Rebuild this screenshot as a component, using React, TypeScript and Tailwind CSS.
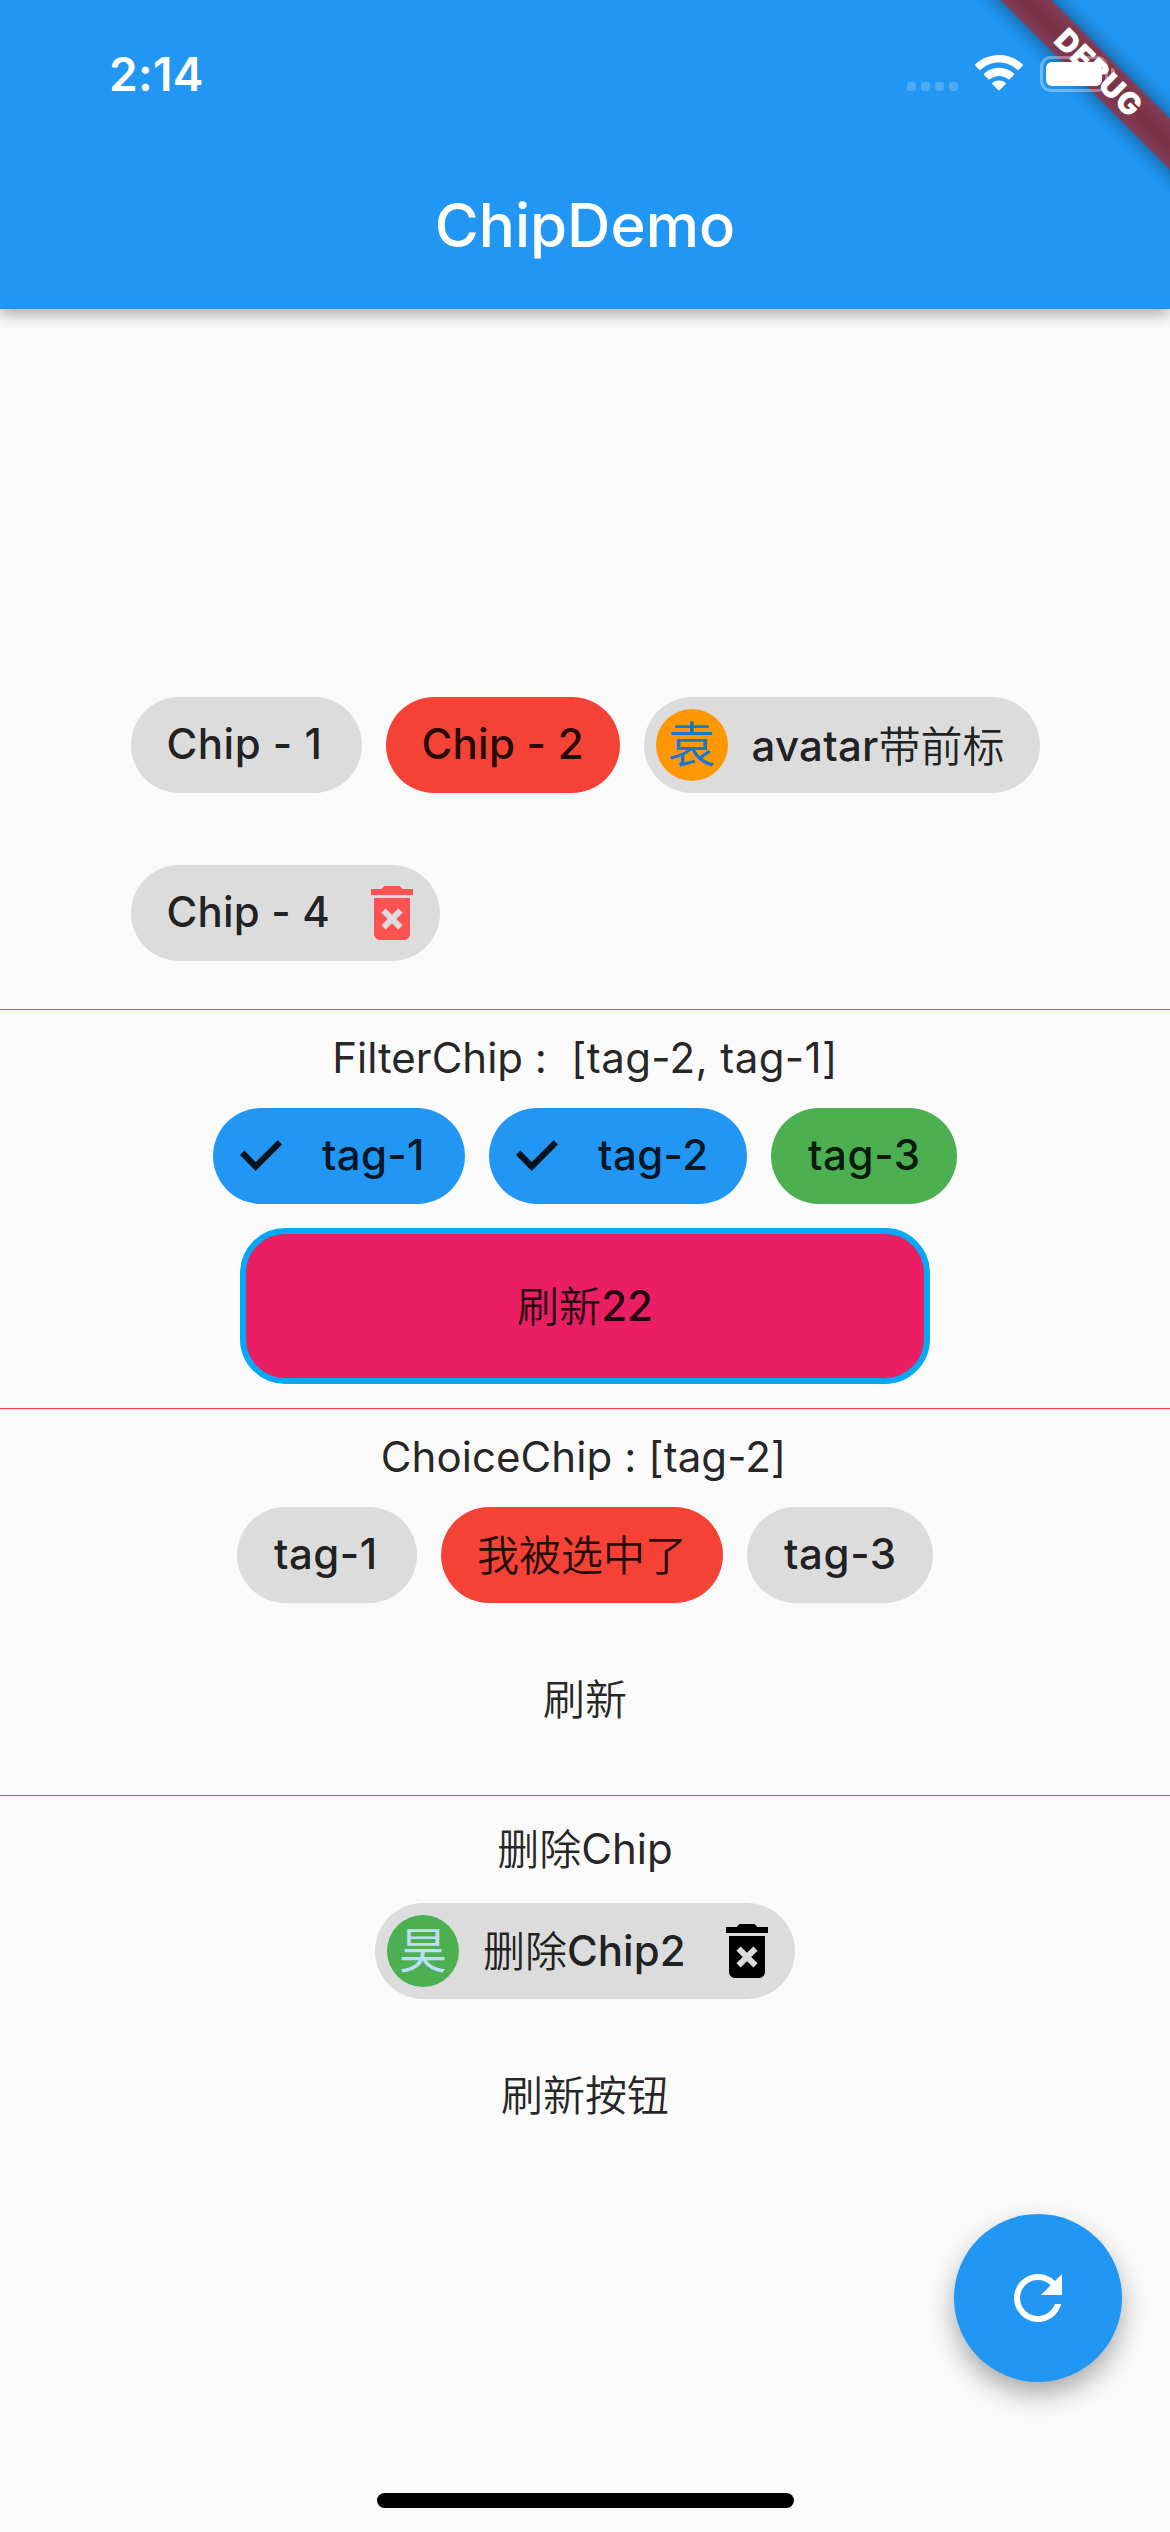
import React from 'react';
import type { ReactNode } from 'react';

const CJK = ({ children }: { children: ReactNode }) => (
  <span className="relative top-px font-['Noto_Sans_CJK_SC',sans-serif] font-[350] leading-none tracking-normal">
    {children}
  </span>
);

function Chip({
  className,
  leading,
  trailing,
  labelClass = '',
  children,
}: {
  className: string;
  leading?: ReactNode;
  trailing?: ReactNode;
  labelClass?: string;
  children: ReactNode;
}) {
  return (
    <div className={`flex h-24 shrink-0 items-center rounded-full ${className}`}>
      {leading && <div className="ml-3 -mr-3 h-[72px] w-[72px] shrink-0">{leading}</div>}
      <div
        className={`ml-9 flex-1 whitespace-pre text-[42px] font-medium leading-[48px] text-black/[0.87] ${labelClass}`}
      >
        {children}
      </div>
      {trailing && <div className="mr-3 h-[72px] w-[72px] shrink-0">{trailing}</div>}
    </div>
  );
}

const Trash = ({ className }: { className: string }) => (
  <svg viewBox="0 0 24 24" className={`h-[72px] w-[72px] ${className}`} fill="currentColor">
    <path d="M6 19c0 1.1.9 2 2 2h8c1.1 0 2-.9 2-2V7H6v12zm2.46-7.12l1.41-1.41L12 12.59l2.12-2.12 1.41 1.41L13.41 14l2.12 2.12-1.41 1.41L12 15.41l-2.12 2.12-1.41-1.41L10.59 14l-2.13-2.12zM15.5 4l-1-1h-5l-1 1H5v2h14V4z" />
  </svg>
);

const Check = () => (
  <svg viewBox="0 0 72 72" className="h-[72px] w-[72px]" fill="none" stroke="black" strokeOpacity="0.87" strokeWidth="6.2">
    <path d="M17.2 32.8 L30.7 46.5 L54.8 22.4" />
  </svg>
);

const Avatar = ({ className, children }: { className: string; children: ReactNode }) => (
  <div
    className={`flex h-[72px] w-[72px] items-center justify-center rounded-full text-[48px] font-normal leading-none ${className}`}
  >
    {children}
  </div>
);

const Divider = () => <div className="h-px w-full bg-[#f44336]" />;

const Caption = ({ className, children }: { className: string; children: ReactNode }) => (
  <div
    className={`flex w-full items-center justify-center whitespace-pre text-[42px] leading-[48px] text-black/[0.87] ${className}`}
  >
    <span>{children}</span>
  </div>
);

function StatusBar() {
  return (
    <div className="relative z-20 flex h-[147px] items-start pl-[109px] text-white">
      <div className="mt-[47px] w-[798px] text-[46px] font-semibold leading-[54px] tracking-[0.3px]">2:14</div>
      <div className="mt-[82px] flex gap-[5px]">
        {[0, 1, 2, 3].map((i) => (
          <div key={i} className="h-[9px] w-[9px] rounded-[3px] bg-white/20" />
        ))}
      </div>
      <svg viewBox="0 0 48 36" className="ml-[17px] mt-[55px] h-9 w-12" fill="white">
        <path d="M24 0C14.8 0 6.400 3.500.3 9.400c-.4.4-.4 1 0 1.400l4 4c.4.4 1 .4 1.400 0C10.500 10.200 16.900 7.500 24 7.500s13.500 2.700 18.300 7.300c.4.4 1 .4 1.400 0l4-4c.4-.4.4-1 0-1.400C41.600 3.500 33.200 0 24 0z" />
        <path d="M24 12.800c-5.700 0-10.900 2.200-14.900 5.700-.4.4-.4 1 0 1.400l4.300 4.400c.4.4 1 .4 1.400 0 2.500-2.100 5.700-3.400 9.200-3.400s6.700 1.300 9.200 3.400c.4.4 1 .4 1.400 0l4.300-4.400c.4-.4.4-1 0-1.400-4-3.500-9.200-5.700-14.900-5.700z" />
        <path d="M24 25.500c-2.500 0-4.700.8-6.500 2.200-.5.4-.5 1 0 1.500l5.700 5.900c.5.500 1.100.5 1.600 0l5.700-5.900c.5-.5.5-1.100 0-1.500-1.800-1.400-4-2.200-6.500-2.200z" />
      </svg>
      <div className="ml-[17px] mt-14 flex items-center">
        <div className="h-9 w-[68px] rounded-[11px] border-[3px] border-white/35 p-[3px]">
          <div className="h-6 w-[56px] rounded-[6px] bg-white" />
        </div>
        <div className="ml-[3px] h-[12px] w-1 rounded-r-full bg-white/40" />
      </div>
    </div>
  );
}

function DebugBanner() {
  return (
    <div className="pointer-events-none absolute right-0 top-0 z-10 h-[240px] w-[240px] overflow-hidden">
      <div className="absolute left-[-32px] top-[54px] flex h-9 w-[400px] rotate-45 items-center justify-center bg-linear-to-b from-[#813d57] via-[#7a3145] to-[#813d57] pl-0.5 text-[30.6px] font-black leading-none tracking-[0.6px] text-white shadow-[0_0_20px_rgba(0,0,0,0.5)]">
        DEBUG
      </div>
    </div>
  );
}

export default function App() {
  return (
    <div className="relative flex h-[2532px] w-[1170px] flex-col overflow-hidden bg-[#fafafa] font-[Inter,'Noto_Sans_CJK_SC',sans-serif]">
      <header className="h-[309px] shrink-0 bg-[#2196f3] shadow-[0_6px_14px_rgba(0,0,0,0.3)]">
        <StatusBar />
        <h1 className="mt-[42px] text-center text-[60px] font-medium leading-[72px] text-white">ChipDemo</h1>
      </header>
      <DebugBanner />

      <main className="flex flex-col items-center">
        <section className="mb-12 mt-[388px] flex w-[909px] flex-wrap gap-x-6 gap-y-[72px]">
          <Chip className="w-[231px] bg-[#dcdcdc]" labelClass="tracking-[0.5px] pb-0.5">
            Chip - 1
          </Chip>
          <Chip className="w-[234px] bg-[#f44336]" labelClass="tracking-[0.25px] pb-0.5">
            Chip - 2
          </Chip>
          <Chip
            className="w-[396px] bg-[#dcdcdc]"
            labelClass="tracking-[0.25px] pt-0.5"
            leading={<Avatar className="bg-[#ff9800] text-[#1976d2]">袁</Avatar>}
          >
            avatar<CJK>带前标</CJK>
          </Chip>
          <Chip
            className="w-[309px] bg-[#dcdcdc]"
            labelClass="tracking-[0.2px] pb-0.5"
            trailing={<Trash className="text-[#ff5252]" />}
          >
            Chip - 4
          </Chip>
        </section>

        <Divider />
        <Caption className="mb-[3px] h-[95px]">
          FilterChip : <span className="tracking-[0.5px]"> </span>
          <span className="tracking-[0.4px]">[tag-2, tag-1]</span>
        </Caption>
        <section className="flex gap-6">
          <Chip className="w-[252px] bg-[#2196f3]" labelClass="tracking-[0.3px] pl-px pb-0.5" leading={<Check />}>
            tag-1
          </Chip>
          <Chip className="w-[258px] bg-[#2196f3]" labelClass="tracking-[0.4px] pl-px pb-0.5" leading={<Check />}>
            tag-2
          </Chip>
          <Chip className="w-[186px] bg-[#4caf50]" labelClass="tracking-[0.6px] pl-px pb-0.5">
            tag-3
          </Chip>
        </section>
        <button className="my-6 flex h-[156px] w-[690px] items-center justify-center rounded-[45px] border-[6px] border-[#03a9f4] bg-[#e91e63] text-[42px] font-medium leading-[48px] text-black/[0.87]">
          <span>
            <CJK>刷新</CJK>22
          </span>
        </button>

        <Divider />
        <Caption className="mb-[3px] h-[95px] pr-[3px] tracking-[0.08px]">ChoiceChip : [tag-2]</Caption>
        <section className="flex gap-6">
          <Chip className="w-[180px] bg-[#dcdcdc]" labelClass="tracking-[0.5px] pl-px pb-0.5">
            tag-1
          </Chip>
          <Chip className="w-[282px] bg-[#f44336]">
            <CJK>我被选中了</CJK>
          </Chip>
          <Chip className="w-[186px] bg-[#dcdcdc]" labelClass="tracking-[0.6px] pl-px pb-0.5">
            tag-3
          </Chip>
        </section>
        <Caption className="h-48">
          <CJK>刷新</CJK>
        </Caption>

        <Divider />
        <Caption className="mb-px h-[106px]">
          <CJK>删除</CJK>Chip
        </Caption>
        <Chip
          className="w-[420px] bg-[#dcdcdc]"
          leading={<Avatar className="bg-[#4caf50] text-[#bbdefb]">昊</Avatar>}
          trailing={<Trash className="text-black" />}
        >
          <CJK>删除</CJK>Chip2
        </Chip>
        <Caption className="h-48">
          <CJK>刷新按钮</CJK>
        </Caption>
      </main>

      <button className="absolute bottom-[150px] right-12 flex h-[168px] w-[168px] items-center justify-center rounded-full bg-[#2196f3] shadow-[0_12px_26px_rgba(0,0,0,0.32)]">
        <svg viewBox="0 0 24 24" className="h-[72px] w-[72px]" fill="white">
          <path d="M17.65 6.35C16.2 4.9 14.21 4 12 4c-4.420 0-7.990 3.580-7.990 8s3.570 8 7.990 8c3.730 0 6.840-2.550 7.730-6h-2.080c-.82 2.330-3.040 4-5.650 4-3.310 0-6-2.690-6-6s2.690-6 6-6c1.660 0 3.140.69 4.220 1.780L13 11h7V4l-2.350 2.350z" />
        </svg>
      </button>
      <div className="absolute bottom-6 left-[377px] h-[15px] w-[417px] rounded-full bg-black" />
    </div>
  );
}
